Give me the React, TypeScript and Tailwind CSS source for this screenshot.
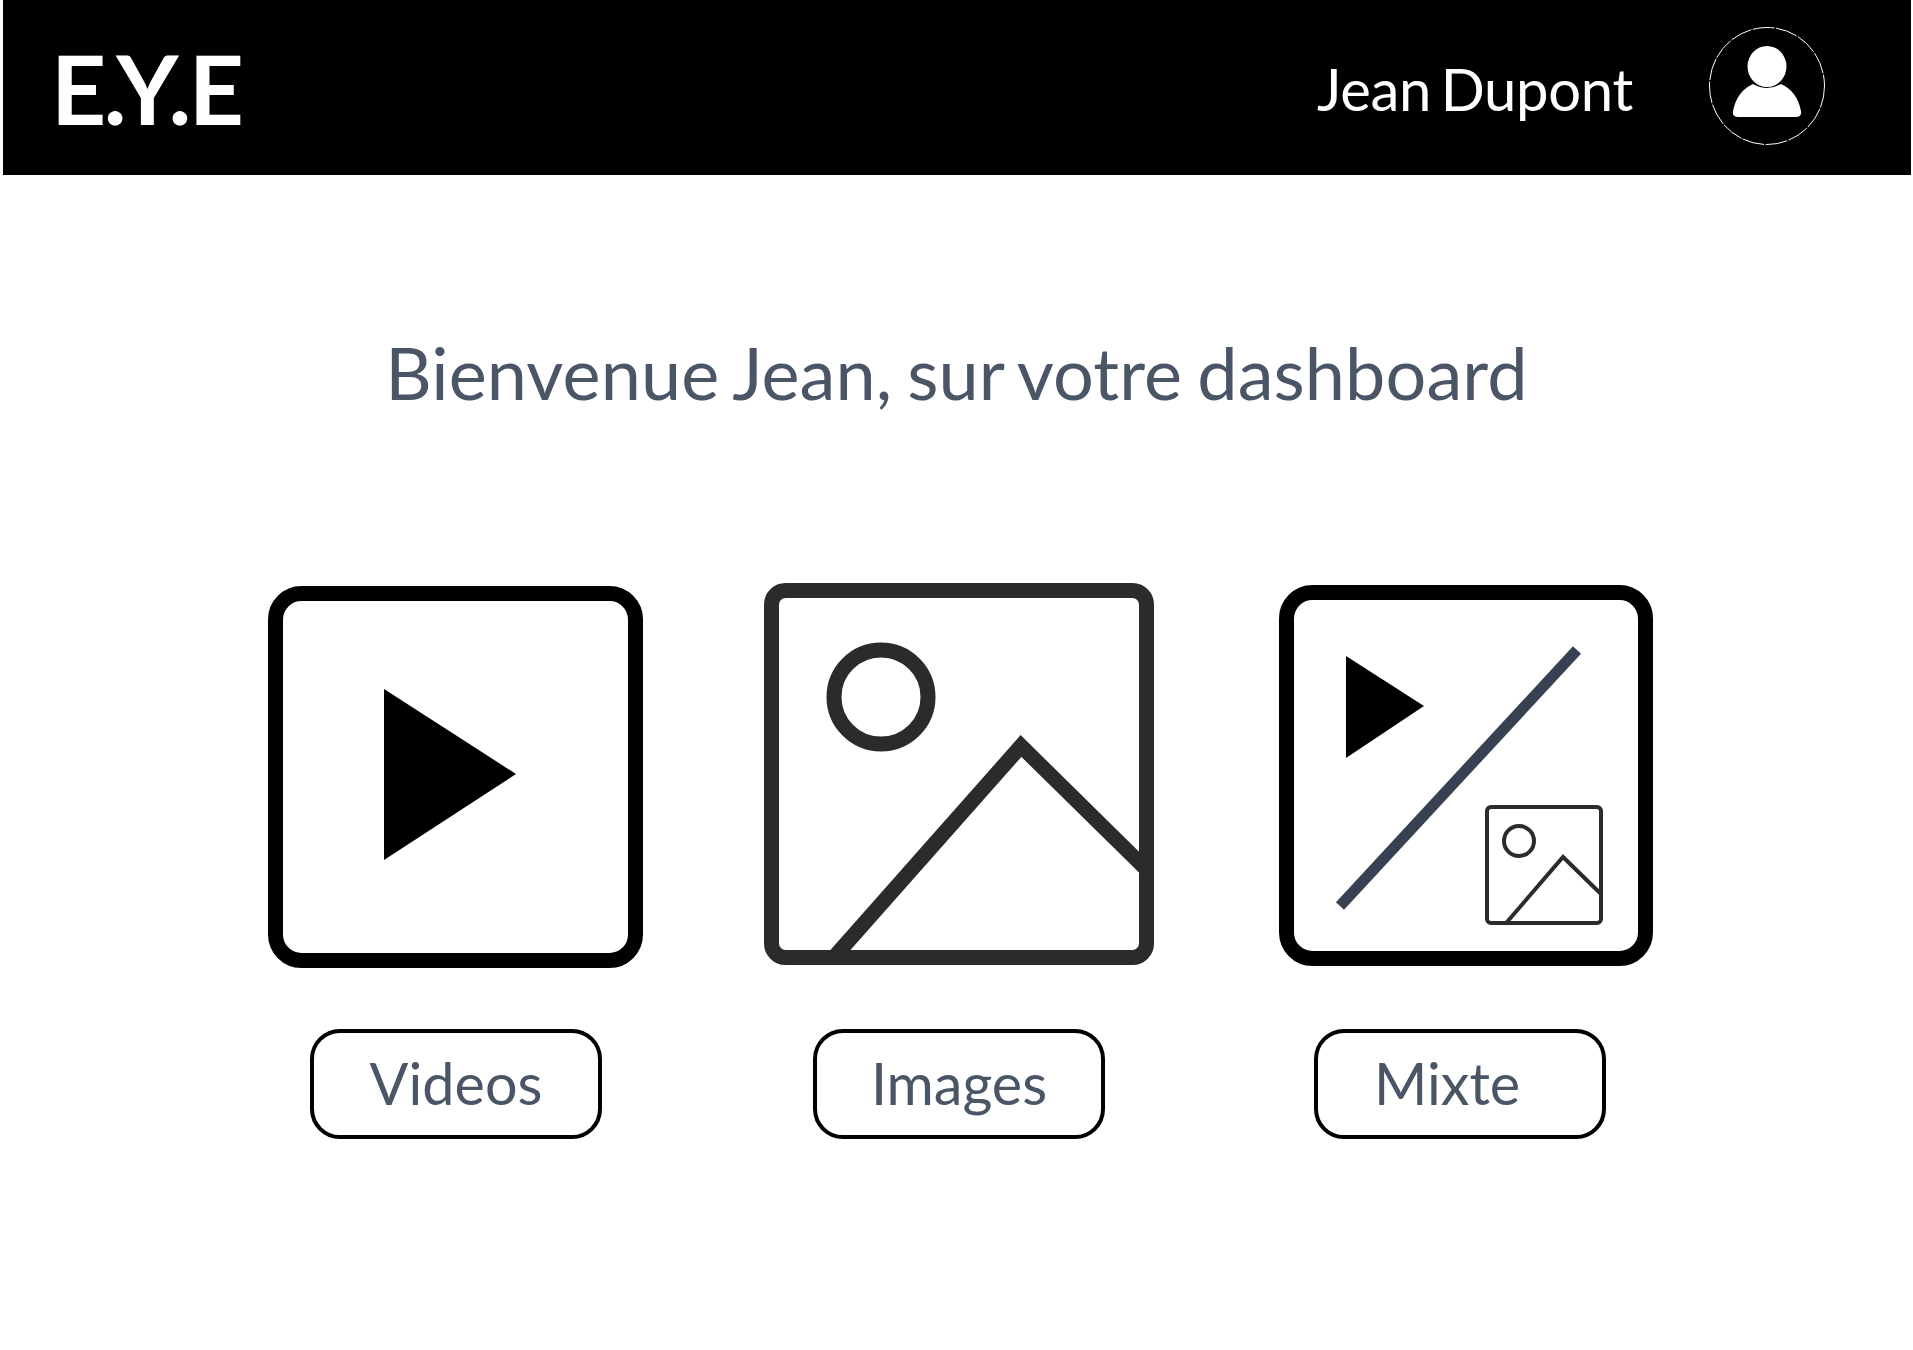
const FONT = "font-['Lato',_'Liberation_Sans',_sans-serif]";

function Avatar() {
  return (
    <svg width="116" height="118" viewBox="0 0 116 118" className="shrink-0">
      <ellipse cx="58" cy="59" rx="57.5" ry="58.5" fill="none" stroke="white" strokeWidth="1" strokeDasharray="22 1.5" />
      <ellipse cx="58" cy="39.5" rx="19.5" ry="20.5" fill="white" />
      <path d="M44 57 Q58 65 72 57 Q88 64 92 84 Q93 90 87 90 L29 90 Q23 90 24 84 Q28 64 44 57 Z" fill="white" />
    </svg>
  );
}

function VideoIcon() {
  return (
    <svg width="375" height="382" viewBox="0 0 375 382" className="shrink-0">
      <rect x="7.5" y="7.5" width="360" height="367" rx="26" fill="none" stroke="black" strokeWidth="15" />
      <polygon points="116,103 248,188 116,274" fill="black" />
    </svg>
  );
}

function ImageIcon() {
  return (
    <svg width="390" height="382" viewBox="0 0 390 382" className="shrink-0">
      <rect x="7.5" y="7.5" width="375" height="367" rx="14" fill="none" stroke="#2b2b2b" strokeWidth="15" />
      <circle cx="117" cy="114" r="47" fill="none" stroke="#2b2b2b" strokeWidth="15" />
      <polyline points="72,372 257,163 382,286" fill="none" stroke="#2b2b2b" strokeWidth="15" strokeMiterlimit="10" />
    </svg>
  );
}

function MixedIcon() {
  return (
    <svg width="374" height="381" viewBox="0 0 374 381" className="shrink-0">
      <rect x="7.5" y="7.5" width="359" height="366" rx="26" fill="none" stroke="black" strokeWidth="15" />
      <polygon points="67,71 145,121 67,173" fill="black" />
      <line x1="298" y1="65" x2="61" y2="321" stroke="#374151" strokeWidth="11" />
      <rect x="208" y="222" width="114" height="116" rx="4" fill="none" stroke="#2b2b2b" strokeWidth="4" />
      <circle cx="240" cy="256" r="15" fill="none" stroke="#2b2b2b" strokeWidth="4" />
      <polyline points="228,337 284,272 322,309" fill="none" stroke="#2b2b2b" strokeWidth="4" />
    </svg>
  );
}

function Pill({ label, className }: { label: string; className: string }) {
  return (
    <button className={`w-[292px] h-[110px] rounded-[30px] border-4 border-black bg-white text-[57.5px] leading-none text-gray-600 pb-[2px] ${className}`}>
      {label}
    </button>
  );
}

export default function App() {
  return (
    <div className={`min-h-[1350px] bg-white ${FONT}`}>
      <header className="ml-[3px] mr-[2px] h-[175px] bg-black text-white flex items-center">
        <span className="ml-[48px] text-[96px] font-bold tracking-[-2.5px] leading-none">E.Y.E</span>
        <span className="ml-auto text-[58px] font-normal leading-none tracking-[-0.3px] [word-spacing:-5px] mr-[76px] mt-[2px]">Jean Dupont</span>
        <div className="mr-[86px] self-start mt-[27px]">
          <Avatar />
        </div>
      </header>

      <h1 className="mt-[161px] text-center text-[72px] leading-none tracking-[0.1px] [word-spacing:-3.5px] text-gray-600">
        Bienvenue Jean, sur votre dashboard
      </h1>

      <div className="mt-[175px] flex items-start pl-[268px]">
        <div className="mt-[3px]"><VideoIcon /></div>
        <div className="ml-[121px]"><ImageIcon /></div>
        <div className="ml-[125px] mt-[2px]"><MixedIcon /></div>
      </div>

      <div className="mt-[61px] flex pl-[310px]">
        <Pill label="Videos" className="" />
        <Pill label="Images" className="ml-[211px]" />
        <Pill label="Mixte" className="ml-[209px] text-left pl-[56px]" />
      </div>
    </div>
  );
}
